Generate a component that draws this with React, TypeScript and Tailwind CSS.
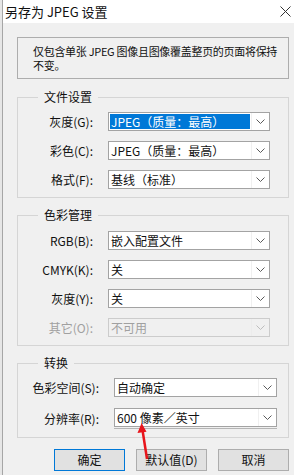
import React from 'react';

const font = { fontFamily: '"Noto Sans CJK SC", "Liberation Sans", sans-serif' };

function Chevron({ disabled }: { disabled?: boolean }) {
  return (
    <svg width="9" height="5" viewBox="0 0 9 5" className="shrink-0">
      <path d="M0.5 0.5 L4.5 4.5 L8.5 0.5" fill="none" stroke={disabled ? '#bdbdbd' : '#5a5a5a'} strokeWidth="1" />
    </svg>
  );
}

function Select({ value, selected, disabled, shadow }: { value: string; selected?: boolean; disabled?: boolean; shadow?: boolean }) {
  return (
    <div className="flex flex-col w-full">
      <div
        className={`flex items-center h-[19px] border ${disabled ? 'border-[#cccccc] bg-[#f0f0f0]' : 'border-[#a3a3a3] bg-white'}`}
      >
        <div className="flex-1 h-full p-[1px]">
          <div
            className={`h-full flex items-center pl-[1px] text-[12px] leading-none ${
              selected ? 'bg-[#0078d7] text-white' : disabled ? 'text-[#a0a0a0]' : 'text-[#111]'
            }`}
          >
            {value}
          </div>
        </div>
        <div className={`w-[18px] h-full flex items-center justify-center border-l ${disabled ? 'border-[#ececec]' : 'border-[#f0f0f0]'}`}>
          <Chevron disabled={disabled} />
        </div>
      </div>
      {shadow && <div className="h-[1px] mt-[1px] bg-[#b5b5b5]" />}
    </div>
  );
}

function Row({ label, children, disabled, labelW }: { label: string; children: React.ReactNode; disabled?: boolean; labelW: string }) {
  return (
    <div className="flex items-center">
      <div className={`${labelW} shrink-0 text-right pr-[15px] text-[12px] ${disabled ? 'text-[#a0a0a0]' : 'text-[#111]'}`}>{label}</div>
      <div className="flex-1">{children}</div>
    </div>
  );
}

function Group({ title, children, className }: { title: string; children: React.ReactNode; className: string }) {
  return (
    <div className={`relative border border-[#d5d5d5] ${className}`}>
      <div className="absolute -top-[9px] left-[20px] px-[6px] bg-[#f0f0f0] text-[12px] leading-[16px] text-[#111]">{title}</div>
      {children}
    </div>
  );
}

export default function App() {
  return (
    <div className="relative w-[294px] h-[475px] flex overflow-hidden bg-[#f0f0f0]" style={font}>
      {/* window behind */}
      <div className="w-[2px] bg-[#e6e6e6]" />
      <div className="w-[1px] bg-[#a6a6a6]" />

      <div className="flex-1 flex flex-col">
        {/* title bar */}
        <div className="h-[23px] bg-white flex items-center justify-between pl-[2px] pr-[3px]">
          <span className="text-[13px] text-[#111] leading-none">另存为 JPEG 设置</span>
          <svg width="11" height="11" viewBox="0 0 11 11">
            <path d="M0.5 0.5 L10.5 10.5 M10.5 0.5 L0.5 10.5" stroke="#333" strokeWidth="1" />
          </svg>
        </div>

        <div className="flex flex-col pl-[14px] pr-[5px]">
          {/* info */}
          <div className="mt-[14px] h-[42px] border border-[#adadad] pl-[15px] pr-[1px] pt-[6px] text-[11px] leading-[14px] tracking-[-0.3px] text-[#111]">
            仅包含单张 JPEG 图像且图像覆盖整页的页面将保持不变。
          </div>

          <Group title="文件设置" className="mt-[18px] h-[101px] pt-[14px] pr-[18px]">
            <div className="flex flex-col gap-[10px]">
              <Row label="灰度(G):" labelW="w-[90px]">
                <Select value="JPEG（质量：最高）" selected />
              </Row>
              <Row label="彩色(C):" labelW="w-[90px]">
                <Select value="JPEG（质量：最高）" />
              </Row>
              <Row label="格式(F):" labelW="w-[90px]">
                <Select value="基线（标准）" />
              </Row>
            </div>
          </Group>

          <Group title="色彩管理" className="mt-[17px] h-[131px] pt-[15px] pr-[18px]">
            <div className="flex flex-col gap-[10px]">
              <Row label="RGB(B):" labelW="w-[90px]">
                <Select value="嵌入配置文件" />
              </Row>
              <Row label="CMYK(K):" labelW="w-[90px]">
                <Select value="关" />
              </Row>
              <Row label="灰度(Y):" labelW="w-[90px]">
                <Select value="关" />
              </Row>
              <Row label="其它(O):" labelW="w-[90px]" disabled>
                <Select value="不可用" disabled />
              </Row>
            </div>
          </Group>

          <Group title="转换" className="mt-[17px] h-[75px] pt-[14px] pr-[11px]">
            <div className="flex flex-col gap-[11px]">
              <Row label="色彩空间(S):" labelW="w-[96px]">
                <Select value="自动确定" />
              </Row>
              <Row label="分辨率(R):" labelW="w-[96px]">
                <Select value="600 像素／英寸" shadow />
              </Row>
            </div>
          </Group>

          {/* buttons */}
          <div className="mt-[11px] flex justify-end gap-[11px]">
            <button className="w-[71px] h-[22px] bg-[#e1e1e1] border border-[#0078d7] text-[12px] text-[#111]">确定</button>
            <button className="w-[71px] h-[22px] bg-[#e1e1e1] border border-[#adadad] text-[12px] text-[#111]">默认值(D)</button>
            <button className="w-[71px] h-[22px] bg-[#e1e1e1] border border-[#adadad] text-[12px] text-[#111]">取消</button>
          </div>
        </div>
      </div>

      {/* red annotation arrow */}
      <svg className="absolute left-0 top-0 pointer-events-none" width="294" height="475">
        <line x1="147" y1="459" x2="142.5" y2="430" stroke="#e8141b" strokeWidth="2.5" />
        <path d="M141.6 423 L137.5 433 L146.5 431.8 Z" fill="#e8141b" />
      </svg>
    </div>
  );
}
